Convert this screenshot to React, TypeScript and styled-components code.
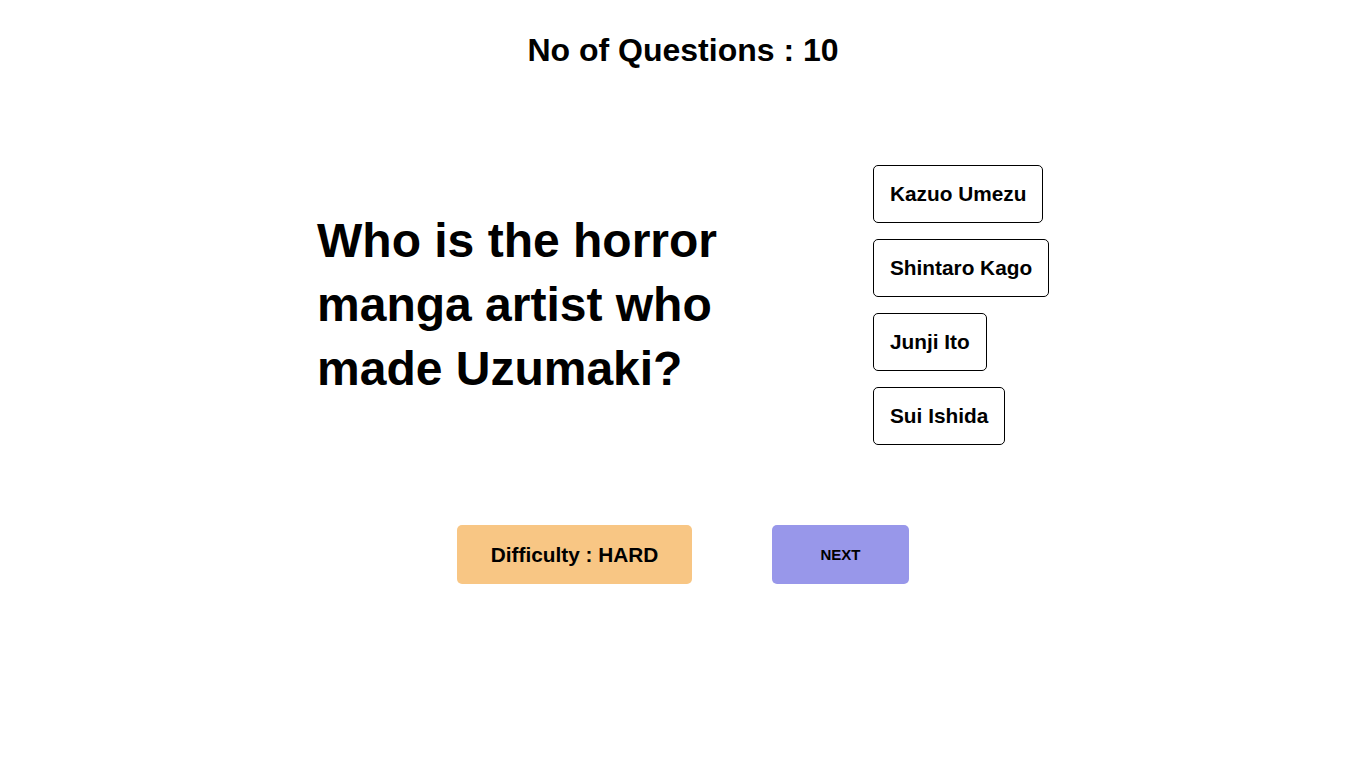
import React from "react";
import styled, { createGlobalStyle } from "styled-components";

const GlobalStyle = createGlobalStyle`
  html, body {
    margin: 0;
    padding: 0;
    background: #ffffff;
    font-family: "Liberation Sans", Arial, sans-serif;
    color: #000;
  }
`;

const Page = styled.div`
  display: flex;
  flex-direction: column;
  align-items: center;
  padding-top: 32px;
  min-height: 768px;
  box-sizing: border-box;
`;

const Title = styled.h1`
  margin: 0;
  font-size: 32px;
  font-weight: 700;
  line-height: 37px;
  text-align: center;
`;

const QuizRow = styled.div`
  display: flex;
  align-items: center;
  justify-content: center;
  gap: 96px;
  margin-top: 96px;
`;

const Question = styled.h2`
  width: 460px;
  margin: 0;
  font-size: 48px;
  font-weight: 700;
  line-height: 64px;
`;

const Options = styled.div`
  width: 176px;
  display: flex;
  flex-direction: column;
  align-items: flex-start;
  gap: 16px;
`;

const OptionButton = styled.button`
  font-family: "Liberation Sans", Arial, sans-serif;
  font-size: 20.8px;
  font-weight: 700;
  line-height: 24px;
  color: #000;
  background: #fff;
  border: 1px solid #000;
  border-radius: 5px;
  padding: 16px;
  cursor: pointer;
  white-space: nowrap;
`;

const Footer = styled.div`
  display: flex;
  justify-content: center;
  align-items: center;
  gap: 80px;
  margin-top: 80px;
`;

const ActionButton = styled.button<{ $bg: string; $size: number; $w: number }>`
  font-family: "Liberation Sans", Arial, sans-serif;
  font-size: ${(p) => p.$size}px;
  font-weight: 700;
  color: #000;
  background: ${(p) => p.$bg};
  border: none;
  border-radius: 5px;
  width: ${(p) => p.$w}px;
  height: 59px;
  padding: 0;
  cursor: pointer;
  white-space: nowrap;
`;

const options = ["Kazuo Umezu", "Shintaro Kago", "Junji Ito", "Sui Ishida"];

export default function App() {
  return (
    <>
      <GlobalStyle />
      <Page>
        <Title>No of Questions : 10</Title>
        <QuizRow>
          <Question>Who is the horror manga artist who made Uzumaki?</Question>
          <Options>
            {options.map((o) => (
              <OptionButton key={o}>{o}</OptionButton>
            ))}
          </Options>
        </QuizRow>
        <Footer>
          <ActionButton $bg="#f8c684" $size={20.8} $w={235}>
            Difficulty : HARD
          </ActionButton>
          <ActionButton $bg="#9897ea" $size={15} $w={137}>
            NEXT
          </ActionButton>
        </Footer>
      </Page>
    </>
  );
}
